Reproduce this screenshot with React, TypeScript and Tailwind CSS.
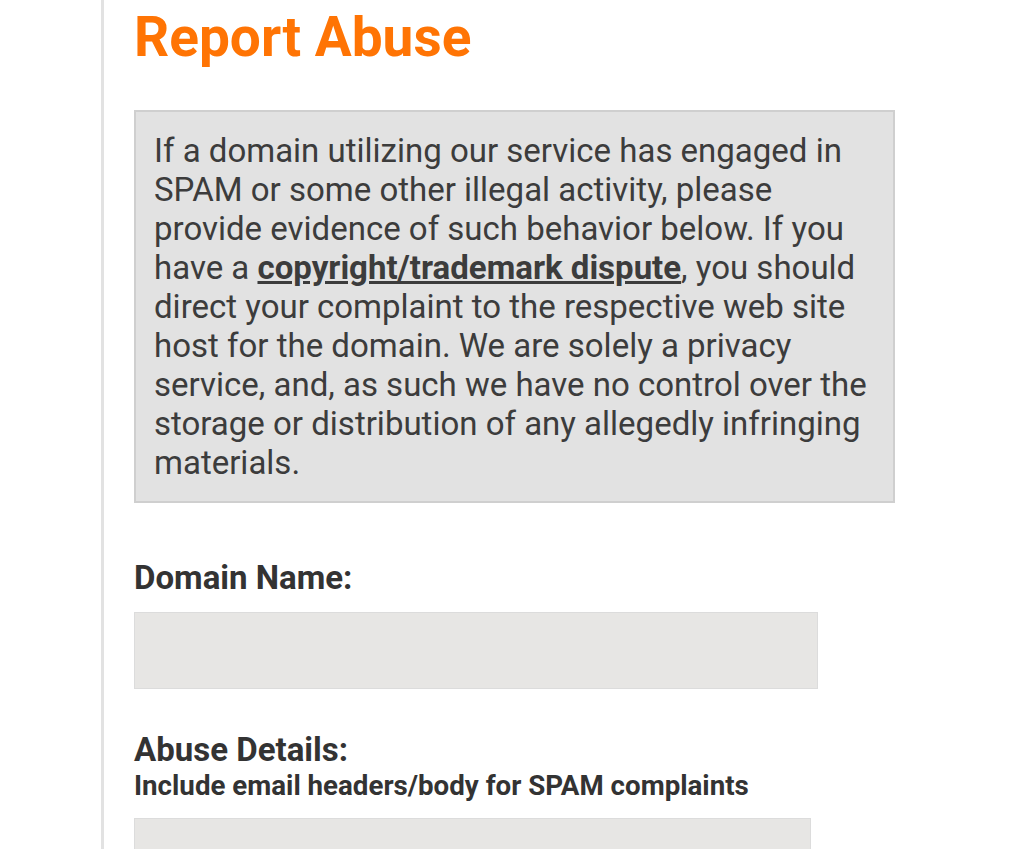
export default function App() {
  return (
    <div
      className="min-h-[849px] bg-white overflow-hidden"
      style={{ fontFamily: "Roboto, 'Liberation Sans', sans-serif" }}
    >
      <div className="ml-[101px] border-l-[3px] border-[#e2e2e2] pl-[30px] min-h-[849px]">
        <h1 className="text-[55px] leading-[64px] font-bold text-[#ff7404] pt-[5px]">
          Report Abuse
        </h1>

        <div className="mt-[41px] w-[761px] bg-[#e2e2e2] border-2 border-[#cfcfcf] pl-[18px] pr-[14px] pt-[19px] pb-[19px]">
          <p className="text-[33px] leading-[39px] text-[#3c3c3c]">
            If a domain utilizing our service has engaged in SPAM or some other
            illegal activity, please provide evidence of such behavior below. If
            you have a{" "}
            <a href="#" className="font-bold underline">
              copyright/trademark dispute
            </a>
            , you should direct your complaint to the respective web site host
            for the domain. We are solely a privacy service, and, as such we
            have no control over the storage or distribution of any allegedly
            infringing materials.
          </p>
        </div>

        <label className="block mt-[55px] text-[33px] leading-[40px] font-bold text-[#333]">
          Domain Name:
        </label>
        <input
          type="text"
          className="block mt-[14px] w-[684px] h-[77px] bg-[#e7e6e4] border border-[#dcdcdc] outline-none"
        />

        <label className="block mt-[41px] text-[33px] leading-[40px] font-bold text-[#333]">
          Abuse Details:
        </label>
        <p className="text-[27.7px] leading-[32px] font-bold text-[#333]">
          Include email headers/body for SPAM complaints
        </p>
        <textarea className="block mt-[16px] w-[677px] h-[120px] bg-[#e7e6e4] border border-[#dcdcdc] outline-none resize-none" />
      </div>
    </div>
  );
}
